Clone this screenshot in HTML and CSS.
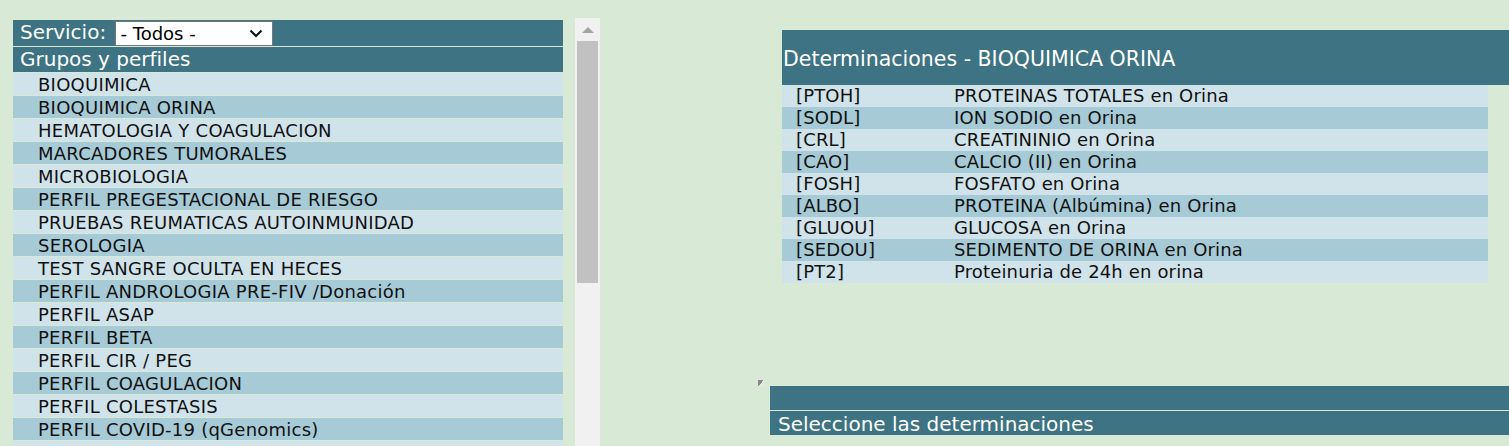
FILE: index.html
```html
<!DOCTYPE html>
<html lang="es">
<head>
  <meta charset="UTF-8" />
  <title>Peticiones - Grupos y perfiles</title>
  <link rel="stylesheet" href="styles.css">
</head>
<body>
  <div class="page">
    <div class="groups-wrap">
      <table class="groups">
        <tr class="head">
          <td>
            Servicio:
            <select class="service">
              <option>- Todos -</option>
            </select>
          </td>
        </tr>
        <tr class="head"><td>Grupos y perfiles</td></tr>
        <tr class="odd"><td>BIOQUIMICA</td></tr>
        <tr class="even"><td>BIOQUIMICA ORINA</td></tr>
        <tr class="odd"><td>HEMATOLOGIA Y COAGULACION</td></tr>
        <tr class="even"><td>MARCADORES TUMORALES</td></tr>
        <tr class="odd"><td>MICROBIOLOGIA</td></tr>
        <tr class="even"><td>PERFIL PREGESTACIONAL DE RIESGO</td></tr>
        <tr class="odd"><td>PRUEBAS REUMATICAS AUTOINMUNIDAD</td></tr>
        <tr class="even"><td>SEROLOGIA</td></tr>
        <tr class="odd"><td>TEST SANGRE OCULTA EN HECES</td></tr>
        <tr class="even"><td>PERFIL ANDROLOGIA PRE-FIV /Donación</td></tr>
        <tr class="odd"><td>PERFIL ASAP</td></tr>
        <tr class="even"><td>PERFIL BETA</td></tr>
        <tr class="odd"><td>PERFIL CIR / PEG</td></tr>
        <tr class="even"><td>PERFIL COAGULACION</td></tr>
        <tr class="odd"><td>PERFIL COLESTASIS</td></tr>
        <tr class="even"><td>PERFIL COVID-19 (qGenomics)</td></tr>
        <tr class="odd"><td></td></tr>
      </table>

      <div class="scrollbar">
        <div class="scroll-up"></div>
        <div class="scroll-thumb"></div>
      </div>
    </div>

    <div class="right">
      <div class="det">
        <div class="det-title">Determinaciones - BIOQUIMICA ORINA</div>
        <table class="det-list">
          <tr class="odd"><td class="code">[PTOH]</td><td>PROTEINAS TOTALES en Orina</td></tr>
          <tr class="even"><td class="code">[SODL]</td><td>ION SODIO en Orina</td></tr>
          <tr class="odd"><td class="code">[CRL]</td><td>CREATININIO en Orina</td></tr>
          <tr class="even"><td class="code">[CAO]</td><td>CALCIO (II) en Orina</td></tr>
          <tr class="odd"><td class="code">[FOSH]</td><td>FOSFATO en Orina</td></tr>
          <tr class="even"><td class="code">[ALBO]</td><td>PROTEINA (Albúmina) en Orina</td></tr>
          <tr class="odd"><td class="code">[GLUOU]</td><td>GLUCOSA en Orina</td></tr>
          <tr class="even"><td class="code">[SEDOU]</td><td>SEDIMENTO DE ORINA en Orina</td></tr>
          <tr class="odd"><td class="code">[PT2]</td><td>Proteinuria de 24h en orina</td></tr>
        </table>
      </div>

      <div class="selected">
        <span class="broken-img"></span>
        <div class="selected-box">
          <div class="selected-bar"></div>
          <div class="selected-title">Seleccione las determinaciones</div>
        </div>
      </div>
    </div>
  </div>
</body>
</html>
```

FILE: styles.css
```css
html {
  overflow: hidden;
}

body {
  margin: 0;
  background: #d8ead6;
  font-family: 'DejaVu Sans', Verdana, sans-serif;
  color: #111;
}

.page {
  display: flex;
  align-items: flex-start;
}

.groups-wrap {
  display: flex;
  align-items: flex-start;
  gap: 12px;
  margin: 19px 0 0 13px;
}

.groups {
  width: 550px;
  border-collapse: separate;
  border-spacing: 0 1px;
}

.groups td {
  height: 22px;
  padding: 0 0 0 25px;
  font-size: 18px;
  line-height: 20px;
  letter-spacing: 0.25px;
  vertical-align: bottom;
  white-space: nowrap;
}

.groups .head td {
  background: #3d7382;
  color: #fff;
  font-size: 20px;
  line-height: 25px;
  letter-spacing: 0;
  vertical-align: middle;
  padding-left: 7px;
  height: 25px;
}

.service {
  appearance: none;
  width: 158px;
  height: 25px;
  padding: 0 0 0 5px;
  font-family: 'DejaVu Sans', Verdana, sans-serif;
  font-size: 18px;
  color: #000;
  border: 1px solid #777;
  border-radius: 0;
  background: #fff url("data:image/svg+xml,%3Csvg xmlns='http://www.w3.org/2000/svg' width='14' height='9' viewBox='0 0 14 9'%3E%3Cpath d='M1.5 1.5l5.5 5.5 5.5-5.5' fill='none' stroke='%23111' stroke-width='2'/%3E%3C/svg%3E") no-repeat right 9px center;
  margin-left: 2px;
  vertical-align: middle;
}

.odd td {
  background: #d0e3ea;
}

.even td {
  background: #a6cad6;
}

.scrollbar {
  width: 25px;
  height: 440px;
  margin-top: -1px;
  background: #f1f1f1;
  display: flex;
  flex-direction: column;
  align-items: center;
}

.scroll-up {
  width: 0;
  height: 0;
  margin: 9px 0 8px;
  border-left: 6px solid transparent;
  border-right: 6px solid transparent;
  border-bottom: 6px solid #a3a3a3;
}

.scroll-thumb {
  width: 21px;
  height: 242px;
  background: #c1c1c1;
}

.right {
  margin-left: 158px;
  flex: 1;
}

.det {
  margin: 30px 0 0 24px;
}

.det-title {
  background: #3d7382;
  color: #fff;
  font-size: 20.5px;
  height: 53px;
  padding-top: 2px;
  line-height: 55px;
  padding-left: 1px;
  white-space: nowrap;
}

.det-list {
  width: 706px;
  border-collapse: collapse;
}

.det-list td {
  height: 22px;
  padding: 0;
  font-size: 18px;
  line-height: 22px;
  letter-spacing: 0.15px;
  white-space: nowrap;
}

.det-list .code {
  width: 158px;
  padding-left: 14px;
}

.selected {
  display: flex;
  align-items: flex-start;
  margin-top: 97px;
}

.broken-img {
  width: 6px;
  height: 6px;
  background: linear-gradient(135deg, #888 50%, #e8e8e8 50%);
}

.selected-box {
  flex: 1;
  margin: 6px 0 0 6px;
}

.selected-bar {
  height: 24px;
  background: #3d7382;
  border-bottom: 1px solid #d8ead6;
}

.selected-title {
  height: 23px;
  padding-top: 1px;
  line-height: 25px;
  background: #3d7382;
  color: #fff;
  font-size: 20px;
  padding-left: 8px;
}
```
